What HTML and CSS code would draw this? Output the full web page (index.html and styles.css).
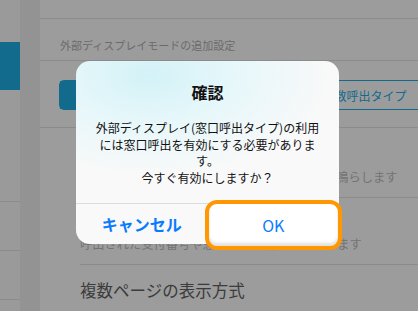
FILE: index.html
```html
<!DOCTYPE html>
<html lang="ja">
<head>
  <meta charset="UTF-8">
  <title>設定</title>
  <meta name="viewport" content="width=device-width, initial-scale=1.0">
  <link rel="stylesheet" href="styles.css">
</head>
<body>

  <div class="app">
    <div class="sidebar">
      <div class="nav-item active"></div>
      <div class="nav-space"></div>
      <div class="nav-item"></div>
      <div class="nav-item"></div>
      <div class="nav-item"></div>
    </div>
    <div class="gutter"></div>

    <div class="main">
      <div class="topbar"></div>
      <div class="section-title">外部ディスプレイモードの追加設定</div>

      <div class="segment-row">
        <div class="segment">
          <div class="segment-item selected">窓口呼出タイプ</div>
          <div class="segment-item">複数呼出タイプ</div>
        </div>
      </div>

      <div class="row">
        <div class="row-title">呼出音</div>
        <div class="row-desc">窓口呼出時に外部ディスプレイでお知らせ音を鳴らします</div>
      </div>
      <div class="row">
        <div class="row-title">音声読み上げ</div>
        <div class="row-desc">呼出された受付番号や窓口番号を音声で読上げます</div>
      </div>

      <div class="heading">複数ページの表示方式</div>
      <div class="heading-desc">受付番号が多い場合の表示方法を選択します</div>
    </div>
  </div>

  <!-- 確認ダイアログ -->
  <div class="overlay">
    <div class="dialog">
      <div class="dialog-title">確認</div>
      <p class="dialog-message">
        外部ディスプレイ(窓口呼出タイプ)の利用<br>
        には窓口呼出を有効にする必要がありま<br>
        す。<br>
        今すぐ有効にしますか？
      </p>
      <div class="dialog-actions">
        <button class="btn btn-cancel">キャンセル</button>
        <button class="btn btn-ok">OK</button>
      </div>
    </div>
  </div>

</body>
</html>
```

FILE: styles.css
```css
:root {
  --blue: #1eaee6;
  --line: #e4e4e4;
  --ios-blue: #0a7aff;
  --focus: #ff9800;
}

body {
  margin: 0;
  padding: 0;
  width: 418px;
  height: 311px;
  overflow: hidden;
  font-family: "Noto Sans CJK JP", "Noto Sans", sans-serif;
  background-color: #fff;
  position: relative;
}

.app {
  display: flex;
  height: 311px;
}

/* サイドバー */
.sidebar {
  width: 20px;
  padding-top: 42px;
  background-color: #fcfcfc;
}

.nav-item {
  height: 48px;
  border-bottom: 1px solid var(--line);
}

.nav-item.active {
  background-color: var(--blue);
  border-bottom: none;
}

.nav-space {
  height: 63px;
}

.gutter {
  width: 20px;
  background-color: #f1f1f1;
}

/* メイン */
.main {
  flex: 1;
  overflow: hidden;
  background-color: #fff;
}

.topbar {
  height: 18px;
  border-bottom: 1px solid var(--line);
}

.section-title {
  padding: 18px 20px 7px;
  font-size: 11px;
  line-height: 16px;
  color: #b0b0b0;
  border-bottom: 1px solid var(--line);
  white-space: nowrap;
}

.segment-row {
  padding: 19px 0 17px 19px;
  border-bottom: 1px solid var(--line);
}

.segment {
  display: flex;
  width: 408px;
  height: 30px;
  border: 1px solid var(--blue);
  border-radius: 5px;
  box-sizing: border-box;
}

.segment-item {
  flex: 1;
  display: flex;
  align-items: center;
  justify-content: center;
  font-size: 12px;
  color: var(--blue);
}

.segment-item.selected {
  background-color: var(--blue);
  color: #fff;
}

.row {
  margin-left: 40px;
  padding: 14px 0 12px;
  border-bottom: 1px solid var(--line);
  white-space: nowrap;
}

.row-title {
  font-size: 14px;
  line-height: 20px;
  color: #555;
}

.row-desc {
  margin-top: 7px;
  font-size: 12.25px;
  line-height: 16px;
  color: #bdbdbd;
}

.row + .row .row-desc {
  margin-top: 4px;
}

.heading {
  margin-left: 40px;
  padding-top: 13px;
  font-size: 16.5px;
  line-height: 24px;
  color: #636363;
}

.heading-desc {
  margin-left: 40px;
  padding-top: 8px;
  font-size: 12px;
  color: #bdbdbd;
  white-space: nowrap;
}

/* ダイアログ */
.overlay {
  position: absolute;
  left: 0;
  top: 0;
  width: 100%;
  height: 100%;
  background-color: rgba(0, 0, 0, 0.39);
}

.dialog {
  position: absolute;
  left: 76px;
  top: 61px;
  width: 263px;
  border-radius: 14px;
  background: radial-gradient(ellipse 70% 55% at 28% 8%, #d3f2f7 0%, #e6f7fa 45%, #f9f9f9 100%);
  text-align: center;
}

.dialog-title {
  padding-top: 21px;
  font-size: 16px;
  line-height: 20px;
  font-weight: bold;
  color: #111;
}

.dialog-message {
  margin: 18px 0 0;
  padding-bottom: 17px;
  font-size: 12px;
  line-height: 16.5px;
  color: #111;
}

.dialog-actions {
  display: grid;
  grid-template-columns: 1fr 1fr;
  height: 40px;
  border-top: 1px solid #dcdcdc;
}

.btn {
  border: none;
  background: none;
  font-family: inherit;
  font-size: 16px;
  color: var(--ios-blue);
  padding: 0;
}

.btn-cancel {
  font-weight: bold;
}

.btn-ok {
  margin: -4px -3px -6px -3px;
  border: 4px solid var(--focus);
  border-radius: 12px;
  background-color: #fff;
  box-shadow: inset 0 -3px 3px rgba(0, 0, 0, 0.12);
}
```
